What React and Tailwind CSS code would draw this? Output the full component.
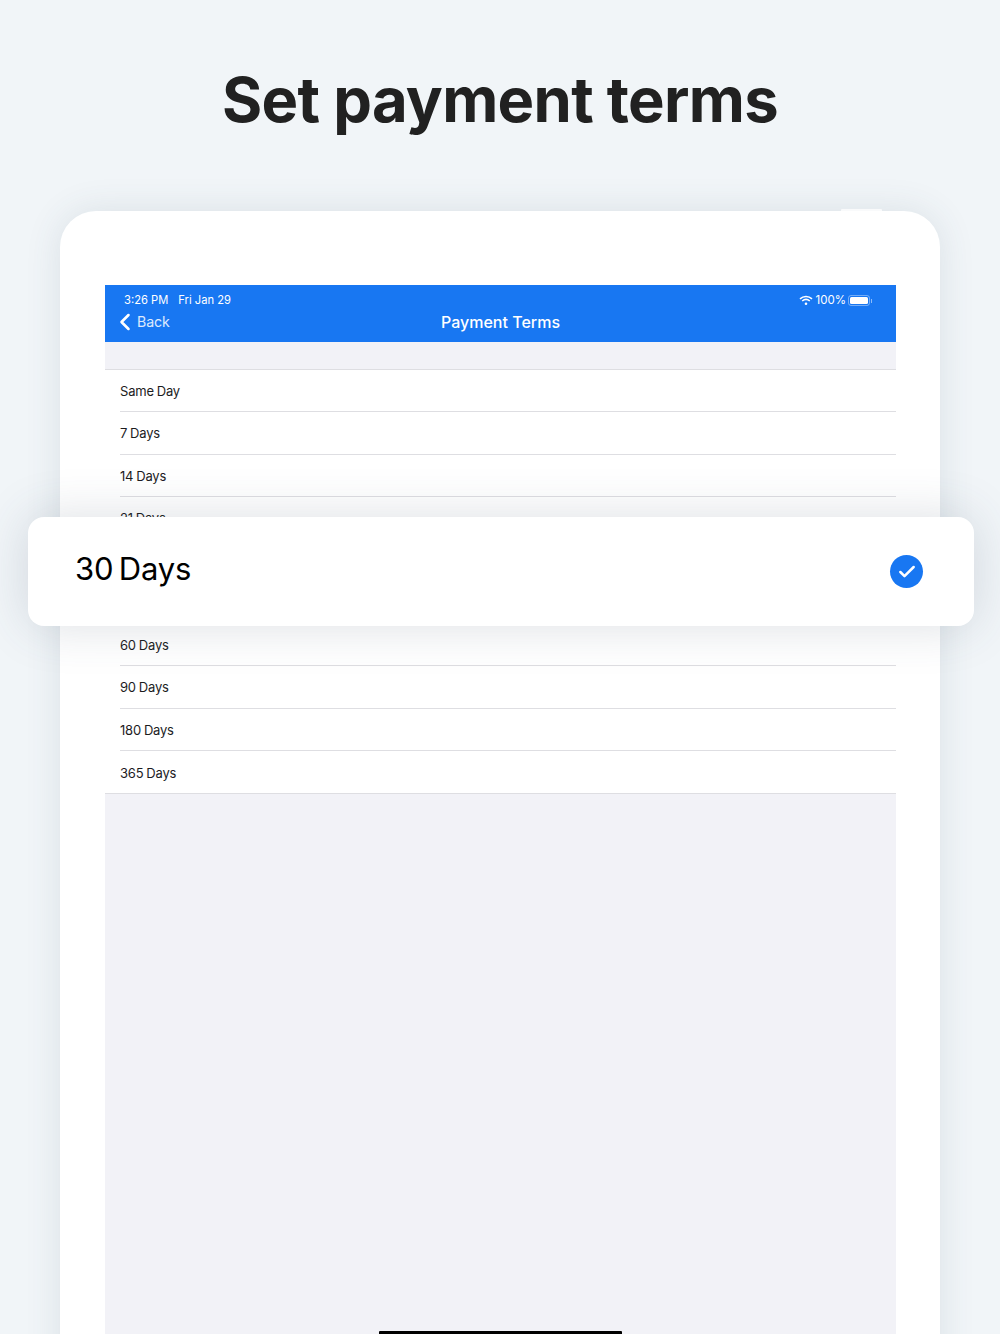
import { Check, ChevronLeft } from "lucide-react";

const terms = ["Same Day", "7 Days", "14 Days", "21 Days", "30 Days", "45 Days", "60 Days", "90 Days", "180 Days", "365 Days"];

function Wifi() {
  return (
    <svg width="14" height="11" viewBox="0 0 14 11" fill="none" stroke="white" strokeWidth="1.6">
      <path d="M1 3.8C4.4 .7 9.6 .7 13 3.8" />
      <path d="M3.2 6C5.4 4.1 8.6 4.1 10.8 6" />
      <circle cx="7" cy="8.8" r="1.3" fill="white" stroke="none" />
    </svg>
  );
}

function Battery() {
  return (
    <div className="flex items-center">
      <div className="flex h-[11px] w-[22px] items-center rounded-[3px] border border-white/40 p-[1px]">
        <div className="h-full w-full rounded-[1.5px] bg-white" />
      </div>
      <div className="ml-[1px] h-[4px] w-[1px] bg-white/50" />
    </div>
  );
}

export default function App() {
  return (
    <div className="relative h-[1334px] overflow-hidden bg-[#f1f5f8] font-['Inter',sans-serif]">
      <h1 className="pt-[60px] text-center text-[61.5px] leading-[80px] font-bold tracking-[-0.7px] text-[#212121]">
        Set payment terms
      </h1>

      <div className="relative mx-[60px] mt-[71px] h-[1200px] rounded-t-[36px] bg-white pt-[74px] pr-[44px] pl-[45px] shadow-[0_0_36px_rgba(60,80,100,0.12)]">
        <div className="absolute -top-[2px] right-[58px] h-[2px] w-[41px] rounded-t-[1px] bg-[#f9fafb]" />

        <div className="flex h-[1049px] flex-col bg-[#f2f2f7]">
          <div className="relative h-[57px] bg-[#1877f2] text-white">
            <div className="flex items-center justify-between pt-[8px] pr-[24px] pl-[19px] text-[11.2px] leading-[15px]">
              <div className="flex gap-[10px]">
                <span>3:26 PM</span>
                <span>Fri Jan 29</span>
              </div>
              <div className="flex items-center gap-[2px]">
                <Wifi />
                <span className="ml-[1px] text-[11.5px]">100%</span>
                <Battery />
              </div>
            </div>
            <div className="flex items-center pl-[9px]">
              <ChevronLeft size={28} strokeWidth={2.2} className="-ml-[3px] -mr-[3px]" />
              <span className="ml-[1px] text-[14.2px] leading-[22px] text-white/85 tracking-[-0.1px]">Back</span>
              <span className="absolute left-0 right-0 text-center text-[16px] leading-[22px] font-medium">Payment Terms</span>
            </div>
          </div>

          <div className="mt-[27px] border-t border-[#dedee2] bg-white">
            {terms.map((term, i) => (
              <div key={term} className="h-[42.35px] pl-[15px]">
                <div className={"flex h-full items-center pt-[2px] text-[13px] tracking-[-0.2px] [word-spacing:-0.5px] text-[#1c1c1e] " + (i < terms.length - 1 ? "border-b border-[#dedee2]" : "")}>
                  {term}
                </div>
              </div>
            ))}
            <div className="h-px bg-[#dedee2]" />
          </div>
        </div>
      </div>

      <div className="absolute top-[517px] right-[26px] left-[28px] flex h-[109px] items-center justify-between rounded-[16px] bg-white pr-[51px] pl-[47px] shadow-[0_0_50px_rgba(60,80,100,0.18)]">
        <span className="-mt-[5px] text-[31px] leading-[40px] tracking-[-0.2px] [word-spacing:-3px] text-black">30 Days</span>
        <div className="flex h-[33px] w-[33px] items-center justify-center rounded-full bg-[#1877f2]">
          <Check size={20} strokeWidth={3} className="text-white" />
        </div>
      </div>

      <div className="absolute bottom-0 left-[379px] h-[3px] w-[243px] rounded-t-[1px] bg-black" />
    </div>
  );
}
